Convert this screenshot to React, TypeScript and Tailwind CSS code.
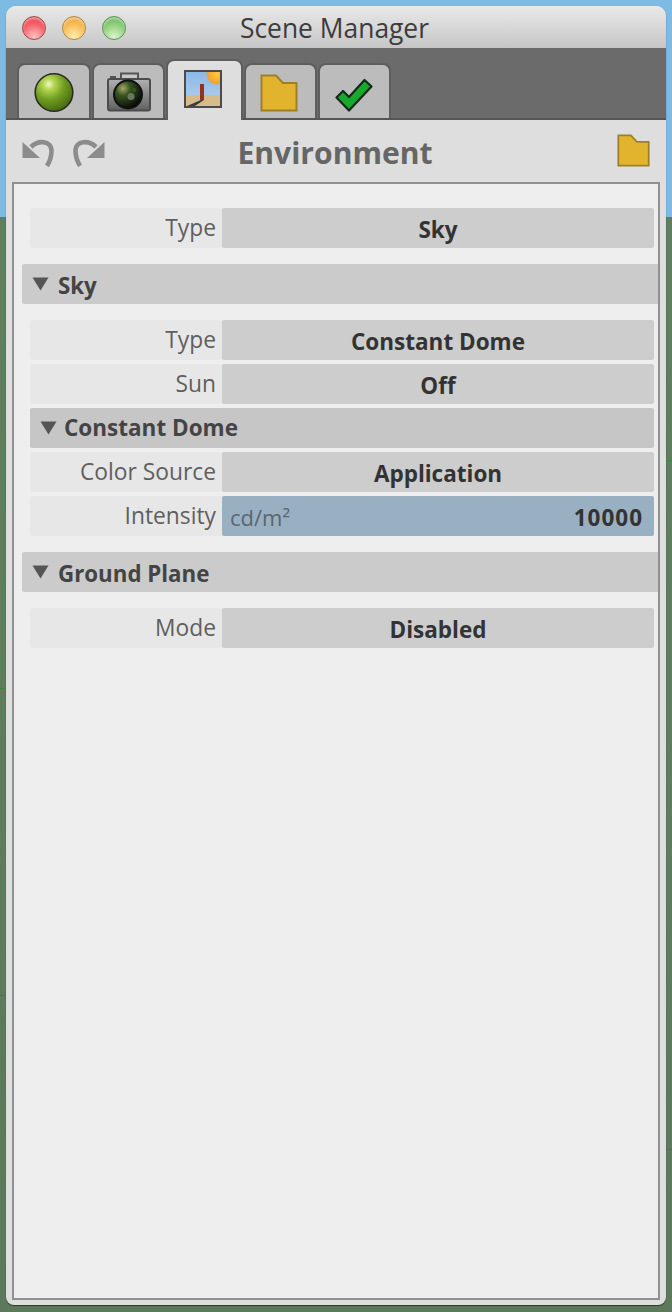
const FONT = "font-['Open_Sans','Noto_Sans',sans-serif]";

function Light({ color }: { color: 'red' | 'orange' | 'green' }) {
  const fills = {
    red: 'border-[#a04a4c] bg-[radial-gradient(circle_at_50%_90%,#ffc4c0_0%,#f4636a_55%,#dc4048_100%)]',
    orange: 'border-[#a88a44] bg-[radial-gradient(circle_at_50%_90%,#ffeeb0_0%,#f8bc58_55%,#e89a38_100%)]',
    green: 'border-[#5c9452] bg-[radial-gradient(circle_at_50%_90%,#dcf5cc_0%,#90cf7c_55%,#62a858_100%)]',
  };
  return <div className={`h-6 w-6 rounded-full border-[1.5px] shadow-[inset_0_2px_2px_rgba(255,255,255,0.45)] ${fills[color]}`} />;
}

function SphereIcon() {
  return (
    <svg width="40" height="41" viewBox="0 0 40 41">
      <defs>
        <radialGradient id="sphere" cx="0.36" cy="0.28" r="0.75">
          <stop offset="0" stopColor="#f0f8cc" />
          <stop offset="0.2" stopColor="#b4d650" />
          <stop offset="0.55" stopColor="#6f9d20" />
          <stop offset="1" stopColor="#46690f" />
        </radialGradient>
      </defs>
      <circle cx="20" cy="20.5" r="18.8" fill="url(#sphere)" stroke="#2b2b25" strokeWidth="1.6" />
    </svg>
  );
}

function CameraIcon() {
  return (
    <svg width="44" height="40" viewBox="0 0 44 40">
      <defs>
        <linearGradient id="cam" x1="0" y1="0" x2="0" y2="1">
          <stop offset="0" stopColor="#b0b0b0" />
          <stop offset="1" stopColor="#616161" />
        </linearGradient>
        <radialGradient id="lens" cx="0.32" cy="0.28" r="0.75">
          <stop offset="0" stopColor="#a4a866" />
          <stop offset="0.35" stopColor="#38541f" />
          <stop offset="1" stopColor="#070a06" />
        </radialGradient>
      </defs>
      <path d="M14 7V1.5h17V7" fill="#c8c8c8" stroke="#555" strokeWidth="2" />
      <rect x="3" y="4" width="6" height="3" fill="#555" />
      <rect x="1" y="7" width="42" height="31.5" rx="2" fill="url(#cam)" stroke="#4c4c4c" strokeWidth="2" />
      <circle cx="21" cy="22.5" r="14" fill="url(#lens)" stroke="#111" strokeWidth="2" />
      <circle cx="24" cy="24.5" r="3.5" fill="#69785e" />
      <circle cx="27" cy="18" r="2" fill="#2f5a22" />
    </svg>
  );
}

function SceneIcon() {
  return (
    <svg width="38" height="38" viewBox="0 0 38 38">
      <defs>
        <linearGradient id="sky" x1="0" y1="0" x2="0" y2="1">
          <stop offset="0" stopColor="#8bb8e8" />
          <stop offset="1" stopColor="#b7d0ea" />
        </linearGradient>
        <radialGradient id="sun" cx="0.5" cy="0.5" r="0.5">
          <stop offset="0" stopColor="#ffc93c" />
          <stop offset="1" stopColor="#f0a030" />
        </radialGradient>
      </defs>
      <rect x="1" y="1" width="36" height="36" fill="url(#sky)" />
      <rect x="1" y="25" width="36" height="12" fill="#d7bc8a" />
      <circle cx="33" cy="4" r="10.5" fill="url(#sun)" />
      <rect x="16" y="14" width="4" height="16" fill="#93301f" />
      <path d="M17 30L2 36.5h8L20 30z" fill="#3a3a3a" />
      <rect x="1" y="1" width="36" height="36" fill="none" stroke="#4a4a4a" strokeWidth="2" />
    </svg>
  );
}

function FolderIcon({ size }: { size: number }) {
  return (
    <svg width={size} height={size} viewBox="0 0 38 38">
      <path d="M1.5 1.5H16L23 9H36.5V36.5H1.5Z" fill="#e2b32d" stroke="#9c8029" strokeWidth="2" />
    </svg>
  );
}

function CheckIcon() {
  return (
    <svg width="38" height="34" viewBox="0 0 38 34">
      <path d="M1.5 19.5L8 13L14 19L29.5 2L36.5 8.5L14 32.5Z" fill="#17a82c" stroke="#15291a" strokeWidth="2.2" strokeLinejoin="round" />
    </svg>
  );
}

function UndoIcon({ flip }: { flip?: boolean }) {
  return (
    <svg width="32" height="28" viewBox="0 0 32 28" className={flip ? '-scale-x-100' : ''}>
      <path d="M0.5 3V19H18Z" fill="#8c8c8c" />
      <path d="M9 8C16 1 29.5 1 29.5 12C29.5 18 28 22 25 27" fill="none" stroke="#8c8c8c" strokeWidth="4.6" />
    </svg>
  );
}

function Caret() {
  return (
    <svg width="17" height="14" viewBox="0 0 17 14" className="shrink-0">
      <path d="M0.5 0.5H16.5L8.5 13.5Z" fill="#555555" />
    </svg>
  );
}

function Row({ label, value }: { label: string; value: string }) {
  return (
    <div className="ml-2 mr-1 flex h-10 rounded-[2px] bg-[#e7e7e7]">
      <div className="flex w-[192px] items-center justify-end pr-[6px] text-[22.8px] text-[#5f5f5f]">{label}</div>
      <div className="flex flex-1 items-center justify-center rounded-[2px] bg-[#cdcdcd] pt-[4px] text-[22.5px] font-bold text-[#333333]">
        {value}
      </div>
    </div>
  );
}

function Section({ label }: { label: string }) {
  return (
    <div className="flex h-10 items-center gap-[9px] rounded-l-[2px] bg-[#cbcbcb] pl-[10px] text-[22.3px] font-bold text-[#444444]">
      <Caret />
      <span className="pt-[4px]">{label}</span>
    </div>
  );
}

const tabBase = 'flex justify-center rounded-t-[8px] border-x-2 border-t-2 border-[#5e5e5e]';

export default function App() {
  return (
    <div className={`relative h-[1312px] w-[672px] overflow-hidden bg-[linear-gradient(#7dbbe3_0,#7dbbe3_217px,#607f5f_217px,#5c7a5b_100%)] pl-[6px] pt-[6px] ${FONT}`}>
      <div className="absolute left-0 top-[688px] h-px w-[6px] bg-[#3c8a3c]" />
      <div className="absolute left-0 top-[995px] h-px w-[6px] bg-[#a04a40]" />
      <div className="absolute right-0 top-[460px] h-px w-[6px] bg-[#3c8a3c]" />
      <div className="absolute right-0 top-[1149px] h-px w-[6px] bg-[#a04a40]" />

      <div className="flex h-[1299px] w-[660px] flex-col overflow-hidden rounded-t-[10px] rounded-b-[8px] bg-[#dedede] shadow-[0_1px_1px_#2e3a2e]">
        {/* Title bar */}
        <div className="grid h-[42px] shrink-0 grid-cols-[1fr_auto_1fr] items-center bg-[linear-gradient(#e9e9e9,#c6c6c6)] pt-[2px]">
          <div className="flex gap-4 pl-4">
            <Light color="red" />
            <Light color="orange" />
            <Light color="green" />
          </div>
          <div className="mr-[3px] pt-[1px] text-[26.4px] text-[#3c3c3c]">Scene Manager</div>
          <div />
        </div>

        {/* Tabs */}
        <div className="flex h-[72px] shrink-0 items-end gap-px border-b-2 border-[#555555] bg-[#6b6b6b] pl-[11px]">
          <div className={`${tabBase} h-[55px] w-[74px] bg-[#bcbcbc] pt-[7px]`}><SphereIcon /></div>
          <div className={`${tabBase} h-[55px] w-[73px] bg-[#bcbcbc] pt-[7px]`}><CameraIcon /></div>
          <div className={`${tabBase} relative -mb-[2px] h-[61px] w-[77px] bg-[#dedede] pr-[3px] pt-[9px]`}><SceneIcon /></div>
          <div className={`${tabBase} h-[55px] w-[73px] bg-[#bcbcbc] pr-[3px] pt-[9px]`}><FolderIcon size={38} /></div>
          <div className={`${tabBase} h-[55px] w-[73px] bg-[#bcbcbc] pr-[2px] pt-[13px]`}><CheckIcon /></div>
        </div>

        {/* Toolbar */}
        <div className="grid h-[62px] shrink-0 grid-cols-[1fr_auto_1fr] items-center px-4">
          <div className="flex gap-[19px] pt-[3px]">
            <UndoIcon />
            <UndoIcon flip />
          </div>
          <div className="mr-[2px] pt-[4px] text-[30.1px] font-bold text-[#666666]">Environment</div>
          <div className="flex justify-end pb-[2px]">
            <FolderIcon size={33} />
          </div>
        </div>

        {/* Property panel */}
        <div className="mx-[6px] mb-[5px] flex-1 border-2 border-[#909090] bg-[#eeeeee] pl-2 pt-6">
          <Row label="Type" value="Sky" />
          <div className="mt-4">
            <Section label="Sky" />
          </div>
          <div className="mt-4 flex flex-col gap-1">
            <Row label="Type" value="Constant Dome" />
            <Row label="Sun" value="Off" />
            <div className="ml-2 mr-1 flex h-10 items-center gap-[7px] rounded-[2px] bg-[#c6c6c6] pl-[10px] text-[22.5px] font-bold text-[#444444]">
              <Caret />
              <span>Constant Dome</span>
            </div>
            <Row label="Color Source" value="Application" />
            <div className="ml-2 mr-1 flex h-10 rounded-[2px] bg-[#e7e7e7]">
              <div className="flex w-[192px] items-center justify-end pr-[6px] text-[22.8px] text-[#5f5f5f]">Intensity</div>
              <div className="flex flex-1 items-center justify-between rounded-[2px] bg-[#99b0c2] pl-2 pr-[11px] pt-[3px] text-[22px]">
                <span className="text-[#5a6670]">cd/m²</span>
                <span className="text-[22.5px] font-bold tracking-[1px] text-[#333333]">10000</span>
              </div>
            </div>
          </div>
          <div className="mt-4">
            <Section label="Ground Plane" />
          </div>
          <div className="mt-4">
            <Row label="Mode" value="Disabled" />
          </div>
        </div>
      </div>
    </div>
  );
}
